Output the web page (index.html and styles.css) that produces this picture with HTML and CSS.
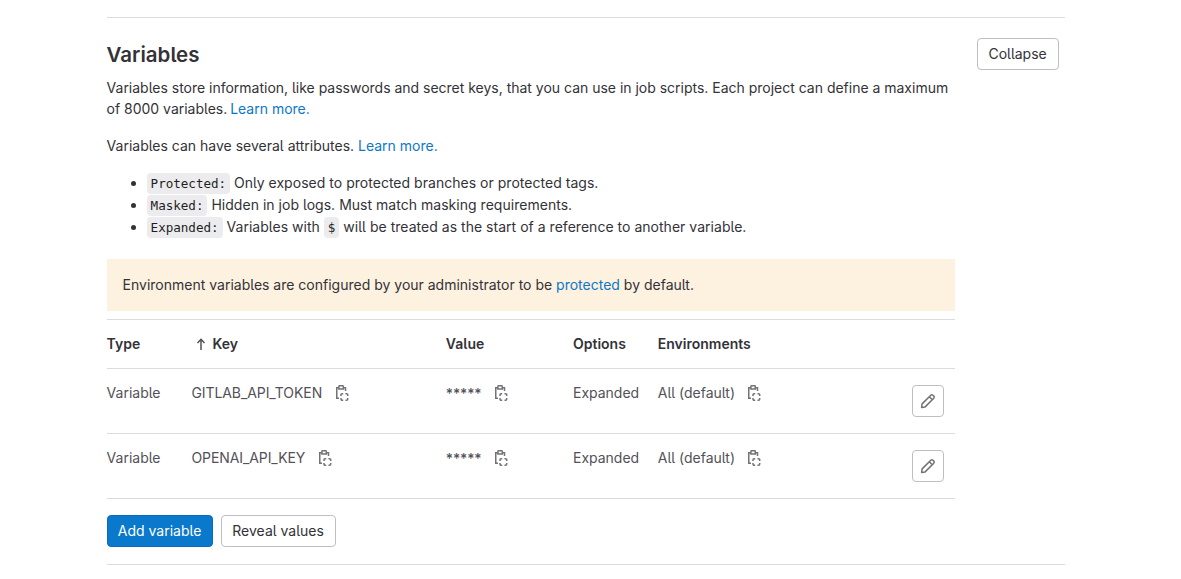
FILE: index.html
```html
<!DOCTYPE html>
<html lang="en">
<head>
<meta charset="utf-8">
<title>Variables</title>
<link rel="stylesheet" href="styles.css">
</head>
<body>
<svg class="sprite" aria-hidden="true">
  <symbol id="copy" viewBox="0 0 16 16">
    <path d="M4.8 2.75H2.75v10.5H5M9.6 2.75h1.9V6M4.9 1.4a.65.65 0 0 1 .65-.65h3.1a.65.65 0 0 1 .65.65v2.6H4.9zM9.2 8.75H8.1a1.1 1.1 0 0 0-1.1 1.1v1.1M11.5 8.75h1.1a1.1 1.1 0 0 1 1.1 1.1v1.1M7 13v1.1a1.1 1.1 0 0 0 1.1 1.1h1.1M13.7 13v1.1a1.1 1.1 0 0 1-1.1 1.1h-1.1" fill="none" stroke="currentColor" stroke-width="1.5"/>
  </symbol>
  <symbol id="pencil" viewBox="0 0 16 16">
    <path d="M1.6 14.4l.5-3.5 8.7-8.7a1.5 1.5 0 0 1 2.1 0l.9.9a1.5 1.5 0 0 1 0 2.1l-8.7 8.7zM9.3 3.7l3 3" fill="none" stroke="currentColor" stroke-width="1.5" stroke-linejoin="round"/>
  </symbol>
</svg>
<section class="settings">
  <header class="heading">
    <h2>Variables</h2>
    <button class="btn">Collapse</button>
  </header>
  <p class="intro">Variables store information, like passwords and secret keys, that you can use in job scripts. Each project can define a maximum<br>of 8000 variables. <a href="#">Learn more.</a></p>
  <div class="content">
    <p class="attributes">Variables can have several attributes. <a href="#">Learn more.</a></p>
    <ul class="list">
      <li><code>Protected:</code> Only exposed to protected branches or protected tags.</li>
      <li><code>Masked:</code> Hidden in job logs. Must match masking requirements.</li>
      <li><code>Expanded:</code> Variables with <code>$</code> will be treated as the start of a reference to another variable.</li>
    </ul>
    <div class="notice">Environment variables are configured by your administrator to be <a href="#">protected</a> by default.</div>
    <div class="table">
      <div class="row head">
        <span>Type</span>
        <span class="sorted"><svg class="arrow" viewBox="0 0 10 12"><path d="M5 12V1.5M1.5 5L5 1.3 8.5 5" fill="none" stroke="currentColor" stroke-width="1.5"/></svg>Key</span>
        <span>Value</span><span>Options</span><span>Environments</span>
      </div>
      <div class="row">
        <span>Variable</span>
        <span class="copyable key">GITLAB_API_TOKEN<svg class="icon"><use href="#copy"/></svg></span>
        <span class="copyable"><span class="mask">*****</span><svg class="icon"><use href="#copy"/></svg></span>
        <span>Expanded</span>
        <span class="copyable">All (default)<svg class="icon"><use href="#copy"/></svg></span>
        <button class="btn edit" aria-label="Edit"><svg class="icon"><use href="#pencil"/></svg></button>
      </div>
      <div class="row">
        <span>Variable</span>
        <span class="copyable key">OPENAI_API_KEY<svg class="icon"><use href="#copy"/></svg></span>
        <span class="copyable"><span class="mask">*****</span><svg class="icon"><use href="#copy"/></svg></span>
        <span>Expanded</span>
        <span class="copyable">All (default)<svg class="icon"><use href="#copy"/></svg></span>
        <button class="btn edit" aria-label="Edit"><svg class="icon"><use href="#pencil"/></svg></button>
      </div>
    </div>
    <div class="actions">
      <button class="btn confirm">Add variable</button>
      <button class="btn reveal">Reveal values</button>
    </div>
  </div>
</section>
</body>
</html>
```
FILE: styles.css
```css
* { box-sizing: border-box; }
body {
  margin: 0;
  background: #fff;
  color: #333238;
  font: 14px/20px Inter, "Noto Sans", sans-serif;
  font-feature-settings: "cv05";
  overflow: hidden;
}
.sprite { display: none; }
a { color: #0b78c8; text-decoration: none; }
p, h2, ul { margin: 0; }
.settings {
  width: 958px;
  height: 548px;
  margin: 17px 0 0 106.6px;
  border-top: 1px solid #dcdcde;
  border-bottom: 1px solid #dcdcde;
}
.heading {
  display: flex;
  justify-content: space-between;
  padding: 20px 6px 0 0;
}
h2 { font-size: 20.5px; line-height: 33px; font-weight: 600; }
.btn {
  width: 82px;
  height: 32px;
  padding: 0;
  border: 1px solid #bfbfc3;
  border-radius: 4px;
  background: #fff;
  color: #333238;
  font: inherit;
  font-feature-settings: inherit;
  white-space: nowrap;
}
.intro { margin-top: 6px; line-height: 21px; letter-spacing: -0.01px; white-space: nowrap; }
.intro a { margin-left: -1px; }
.content { width: 848px; }
.attributes { margin-top: 17px; }
.list { margin-top: 16px; padding-left: 40px; line-height: 22px; letter-spacing: 0.025px; }
code {
  padding: 3px 4px;
  border-radius: 4px;
  background: #ececef;
  color: #1f1e24;
  font: 12.6px "DejaVu Sans Mono", monospace;
  letter-spacing: -0.03px;
}
.notice {
  height: 52px;
  margin: 21px 0 8px;
  padding: 16px;
  background: #fdf1e0;
}
.table { border-top: 1px solid #dcdcde; }
.row {
  display: grid;
  grid-template-columns: 10% 30% 15% 10% 25% 10%;
  height: 65px;
  padding-top: 14px;
  border-bottom: 1px solid #dcdcde;
  color: #535158;
}
.head { height: 49px; font-weight: 600; color: #333238; }
.sorted { display: flex; }
.arrow { width: 10px; height: 12px; margin: 4px 6px 0 5px; color: #535158; }
.icon { width: 16px; height: 16px; color: #737278; }
.copyable { display: flex; gap: 11.4px; }
.copyable .icon { margin-top: 2px; }
.key { letter-spacing: -0.08px; }
.mask { padding-top: 1px; font-weight: 500; letter-spacing: -0.15px; }
.edit {
  display: flex;
  align-items: center;
  justify-content: center;
  justify-self: end;
  width: 32px;
  margin: 2px 11px 0 0;
}
.actions { display: flex; gap: 8px; margin-top: 16px; }
.confirm { width: 106px; background: #0a78cb; border-color: #1068bf; color: #fff; }
.reveal { width: 115px; }
```
